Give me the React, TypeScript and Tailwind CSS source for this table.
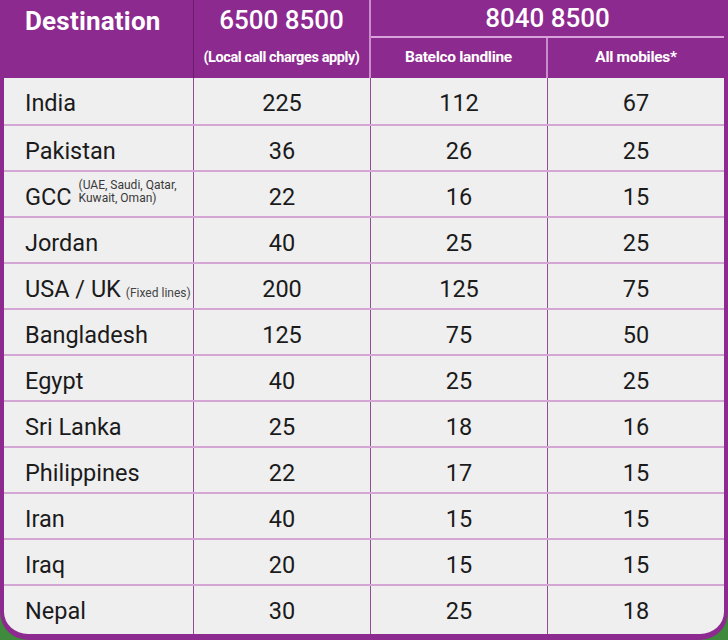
const rows: { name: string; note?: 'gcc' | 'fixed'; a: number; b: number; c: number }[] = [
  { name: 'India', a: 225, b: 112, c: 67 },
  { name: 'Pakistan', a: 36, b: 26, c: 25 },
  { name: 'GCC', note: 'gcc', a: 22, b: 16, c: 15 },
  { name: 'Jordan', a: 40, b: 25, c: 25 },
  { name: 'USA / UK', note: 'fixed', a: 200, b: 125, c: 75 },
  { name: 'Bangladesh', a: 125, b: 75, c: 50 },
  { name: 'Egypt', a: 40, b: 25, c: 25 },
  { name: 'Sri Lanka', a: 25, b: 18, c: 16 },
  { name: 'Philippines', a: 22, b: 17, c: 15 },
  { name: 'Iran', a: 40, b: 15, c: 15 },
  { name: 'Iraq', a: 20, b: 15, c: 15 },
  { name: 'Nepal', a: 30, b: 25, c: 18 },
];

function Destination({ name, note }: { name: string; note?: 'gcc' | 'fixed' }) {
  if (note === 'gcc') {
    return (
      <div className="flex items-start">
        <span>{name}</span>
        <span className="ml-[7px] -mt-[4px] text-[12px] leading-[13px] text-[#3a3a3a]">
          (UAE, Saudi, Qatar,
          <br />
          Kuwait, Oman)
        </span>
      </div>
    );
  }
  if (note === 'fixed') {
    return (
      <div className="flex items-baseline">
        <span>{name}</span>
        <span className="ml-[5px] text-[12px] text-[#444]">(Fixed lines)</span>
      </div>
    );
  }
  return <span>{name}</span>;
}

export default function App() {
  return (
    <div className="h-[640px] w-[728px] bg-[#3f8a3c] font-['Roboto','Liberation_Sans',sans-serif]">
      <div className="flex h-full flex-col overflow-hidden rounded-b-[28px] border-x-4 border-b-[6px] border-[#8d2a90] bg-[#efefef]">
        {/* header */}
        <div className="grid h-[78px] shrink-0 grid-cols-[190px_177px_177px_1fr] grid-rows-[38px_40px] bg-[#8d2a90] text-white">
          <div className="row-span-2 border-r border-[#6c1c70]">
            <div className="flex h-[42px] items-center pl-[21px] text-[26px] font-bold tracking-[0.2px]">
              Destination
            </div>
          </div>
          <div className="row-span-2 flex flex-col items-center border-r-2 border-[#c98dcc]">
            <div className="flex h-[40px] items-center text-[26px] font-medium">6500 8500</div>
            <div className="flex h-[36px] items-center text-[14.5px] font-bold tracking-[-0.4px]">
              (Local call charges apply)
            </div>
          </div>
          <div className="col-span-2 flex items-center justify-center border-b-2 border-[#d7a3da] text-[26px] font-medium">
            8040 8500
          </div>
          <div className="flex items-center justify-center border-r-2 border-[#c98dcc] text-[15.5px] font-bold tracking-[-0.3px]">
            Batelco landline
          </div>
          <div className="flex items-center justify-center text-[15.5px] font-bold tracking-[-0.3px]">
            All mobiles*
          </div>
        </div>

        {/* body */}
        <div className="flex flex-1 flex-col text-[23.5px] leading-[28px] text-[#1b1b1b]">
          {rows.map((r, i) => (
            <div
              key={r.name}
              className={`grid grid-cols-[190px_177px_177px_1fr] ${i === rows.length - 1 ? 'flex-1' : 'h-[46px] shrink-0'} ${i > 0 ? 'border-t-2 border-[#d3a6d6]' : ''}`}
            >
              <div className="border-r border-[#8c4d92] pl-[21px] pt-[11px]">
                <Destination name={r.name} note={r.note} />
              </div>
              <div className="border-r border-[#8c4d92] pt-[11px] text-center">{r.a}</div>
              <div className="border-r border-[#8c4d92] pt-[11px] text-center">{r.b}</div>
              <div className="pt-[11px] text-center">{r.c}</div>
            </div>
          ))}
        </div>
      </div>
    </div>
  );
}
